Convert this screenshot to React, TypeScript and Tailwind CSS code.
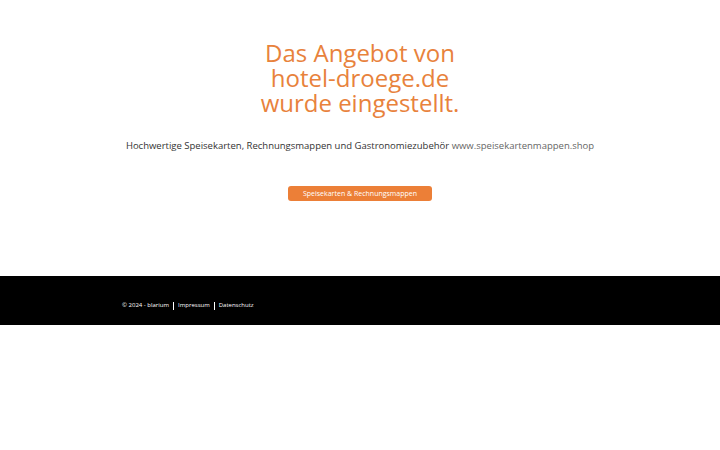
export default function App() {
  return (
    <div className="w-[720px] h-[450px] bg-white" style={{ fontFamily: '"Open Sans", sans-serif' }}>
      <div className="h-[276px] flex flex-col items-center pt-[40px]">
        <h1 className="text-[24px] leading-[25px] text-[#e8823c] text-center font-normal">
          Das Angebot von
          <br />
          hotel-droege.de
          <br />
          wurde eingestellt.
        </h1>
        <p className="mt-[23px] text-[9.5px] leading-[16px] text-[#333]">
          Hochwertige Speisekarten, Rechnungsmappen und Gastronomiezubehör{' '}
          <a className="text-[#666]">www.speisekartenmappen.shop</a>
        </p>
        <button className="mt-[32px] w-[144px] h-[15px] rounded-[3px] bg-[#ec7f37] text-white text-[7px] leading-[15px]">
          Speisekarten &amp; Rechnungsmappen
        </button>
      </div>
      <footer className="h-[49px] bg-black flex items-center pt-[10px] pl-[122px] text-[6px] text-white">
        <span>© 2024 - blarium</span>
        <span className="mx-[4px] w-px h-[8px] bg-white" />
        <span>Impressum</span>
        <span className="mx-[4px] w-px h-[8px] bg-white" />
        <span>Datenschutz</span>
      </footer>
    </div>
  );
}
